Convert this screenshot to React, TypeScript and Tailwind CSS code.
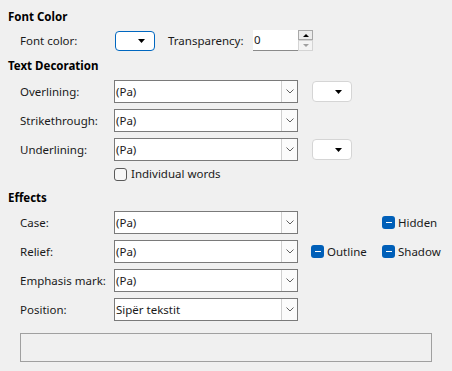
const font = { fontFamily: '"Segoe UI", "Noto Sans", sans-serif' };

function Chevron() {
  return (
    <svg width="8" height="5" viewBox="0 0 8 5" className="text-[#606060]">
      <path d="M0.5 0.5 L4 4 L7.5 0.5" fill="none" stroke="currentColor" strokeWidth="1" />
    </svg>
  );
}

function Caret() {
  return (
    <svg width="7" height="4" viewBox="0 0 7 4">
      <path d="M0 0 H7 L3.5 4 Z" fill="#000" />
    </svg>
  );
}

function Combo({ value }: { value: string }) {
  return (
    <div className="flex h-[23px] w-[184px] border border-[#7a7a7a] bg-white">
      <div className="flex flex-1 items-center pl-[1px] leading-none">{value}</div>
      <div className="flex w-[16px] items-center justify-center border-l border-[#cfcfcf] bg-[#fbfbfb]">
        <Chevron />
      </div>
    </div>
  );
}

function ColorButton({ focused }: { focused?: boolean }) {
  return (
    <div
      className={
        focused
          ? "flex h-[20px] w-[40px] items-center justify-end rounded-[4px] border border-[#0067c0] bg-white pr-[9px]"
          : "flex h-[21px] w-[40px] items-center justify-end rounded-[4px] border border-[#d5d5d5] bg-white pr-[9px]"
      }
    >
      <Caret />
    </div>
  );
}

function Mixed({ label }: { label: string }) {
  return (
    <div className="flex items-center gap-[3px]">
      <div className="flex h-[13px] w-[13px] items-center justify-center rounded-[3px] bg-[#005fb8]">
        <div className="h-[1.5px] w-[6px] bg-white" />
      </div>
      <span>{label}</span>
    </div>
  );
}

function Row({ label, children }: { label: string; children: React.ReactNode }) {
  return (
    <div className="flex h-[23px] items-center pl-3">
      <div className="w-[94px]">{label}</div>
      {children}
    </div>
  );
}

export default function App() {
  return (
    <div
      className="flex h-[371px] w-[452px] flex-col bg-[#f0f0f0] pl-2 pt-[9px] text-[11.5px] text-[#1a1a1a]"
      style={font}
    >
      {/* Font Color */}
      <h3 className="h-4 font-bold leading-4 text-black">Font Color</h3>
      <div className="mt-[5px] flex h-[21px] items-center pl-3">
        <div className="w-[95px]">Font color:</div>
        <ColorButton focused />
        <div className="ml-[13px] w-[85px]">Transparency:</div>
        <div className="flex h-[21px] w-[60px]">
          <div className="flex flex-1 items-center border-b border-[#8a8a8a] bg-white pl-[1px]">0</div>
          <div className="flex w-[15px] flex-col">
            <div className="flex h-[10px] items-center justify-center border border-[#a8a8a8] bg-[#ececec]">
              <svg width="6" height="3" viewBox="0 0 6 3">
                <path d="M0 3 H6 L3 0 Z" fill="#000" />
              </svg>
            </div>
            <div className="flex h-[11px] items-center justify-center border border-[#d4d4d4] bg-[#f4f4f4]">
              <svg width="6" height="3" viewBox="0 0 6 3">
                <path d="M0 0 H6 L3 3 Z" fill="#a0a0a0" />
              </svg>
            </div>
          </div>
        </div>
      </div>

      {/* Text Decoration */}
      <h3 className="mt-[7px] h-4 font-bold leading-4 text-black">Text Decoration</h3>
      <div className="mt-[6px] flex flex-col gap-[6px]">
        <Row label="Overlining:">
          <Combo value="(Pa)" />
          <div className="ml-[14px]">
            <ColorButton />
          </div>
        </Row>
        <Row label="Strikethrough:">
          <Combo value="(Pa)" />
        </Row>
        <Row label="Underlining:">
          <Combo value="(Pa)" />
          <div className="ml-[14px]">
            <ColorButton />
          </div>
        </Row>
      </div>
      <div className="mt-[5px] flex h-4 items-center gap-[4px] pl-[106px]">
        <div className="h-[13px] w-[13px] rounded-[3px] border border-[#5a5a5a] bg-[#f7f7f7]" />
        <span>Individual words</span>
      </div>

      {/* Effects */}
      <h3 className="mt-[8px] h-4 font-bold leading-4 text-black">Effects</h3>
      <div className="mt-[5px] flex flex-col gap-[6px]">
        <Row label="Case:">
          <Combo value="(Pa)" />
          <div className="ml-[84px]">
            <Mixed label="Hidden" />
          </div>
        </Row>
        <Row label="Relief:">
          <Combo value="(Pa)" />
          <div className="ml-[13px] w-[71px]">
            <Mixed label="Outline" />
          </div>
          <Mixed label="Shadow" />
        </Row>
        <Row label="Emphasis mark:">
          <Combo value="(Pa)" />
        </Row>
        <Row label="Position:">
          <Combo value="Sipër tekstit" />
        </Row>
      </div>

      {/* Preview */}
      <div className="ml-3 mt-[12px] h-[29px] w-[412px] border border-[#a0a0a0] bg-[#f0f0f0]" />
    </div>
  );
}
